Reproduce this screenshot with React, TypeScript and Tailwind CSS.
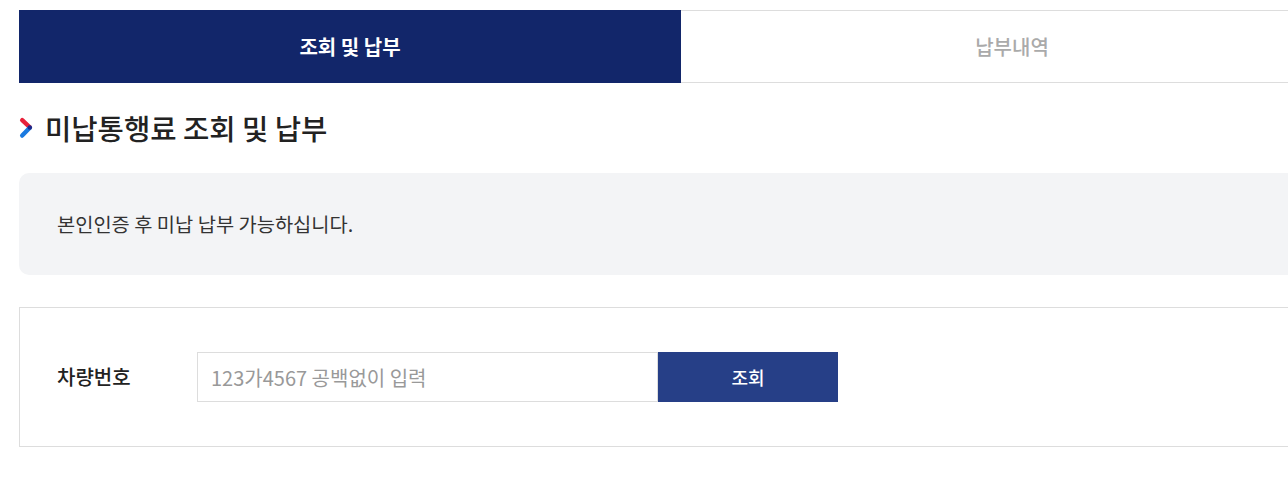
import React from "react";

export default function App() {
  return (
    <div
      className="w-full overflow-hidden bg-white"
      style={{ fontFamily: '"Noto Sans CJK KR", "Noto Sans", sans-serif' }}
    >
      <div className="ml-[19px] w-[1324px] pt-[10px] pb-[40px]">
        {/* Tabs */}
        <div className="flex h-[73px]">
          <div className="flex w-[662px] items-center justify-center bg-[#12266a] text-[20px] font-bold text-white">
            조회 및 납부
          </div>
          <div className="flex w-[662px] items-center justify-center border-y border-[#dddddd] text-[20px] font-medium text-[#aaaaaa]">
            납부내역
          </div>
        </div>

        {/* Title */}
        <div className="mt-[27px] flex h-[36px] items-center">
          <svg width="15" height="22" viewBox="0 0 15 22" className="mr-[11px] shrink-0">
            <path d="M3.2 3.2 L10.5 10" stroke="#e8213a" strokeWidth="4.4" strokeLinecap="round" />
            <path d="M10.5 11 L3.2 18.6" stroke="#1a7ae0" strokeWidth="4.4" strokeLinecap="round" />
            <circle cx="10.8" cy="10.5" r="2.3" fill="#1d2a8a" />
          </svg>
          <h2 className="text-[28.6px] font-medium text-[#222222]">
            미납통행료 조회 및 납부
          </h2>
        </div>

        {/* Info box */}
        <div className="mt-[27px] flex h-[102px] items-center rounded-[10px] bg-[#f3f4f6] pl-[38px]">
          <p className="text-[19.8px] text-[#333333]">본인인증 후 미납 납부 가능하십니다.</p>
        </div>

        {/* Form box */}
        <div className="mt-[32px] flex items-center border border-[#dddddd] py-[44px] pl-[37px]">
          <label className="w-[140px] text-[20px] font-medium text-[#222222]">차량번호</label>
          <input
            type="text"
            placeholder="123가4567 공백없이 입력"
            className="h-[50px] w-[461px] border border-[#dddddd] px-[13px] text-[20px] text-[#333333] outline-none placeholder:text-[#999999]"
          />
          <button className="h-[50px] w-[180px] bg-[#263f87] text-[18px] font-medium text-white">
            조회
          </button>
        </div>
      </div>
    </div>
  );
}
